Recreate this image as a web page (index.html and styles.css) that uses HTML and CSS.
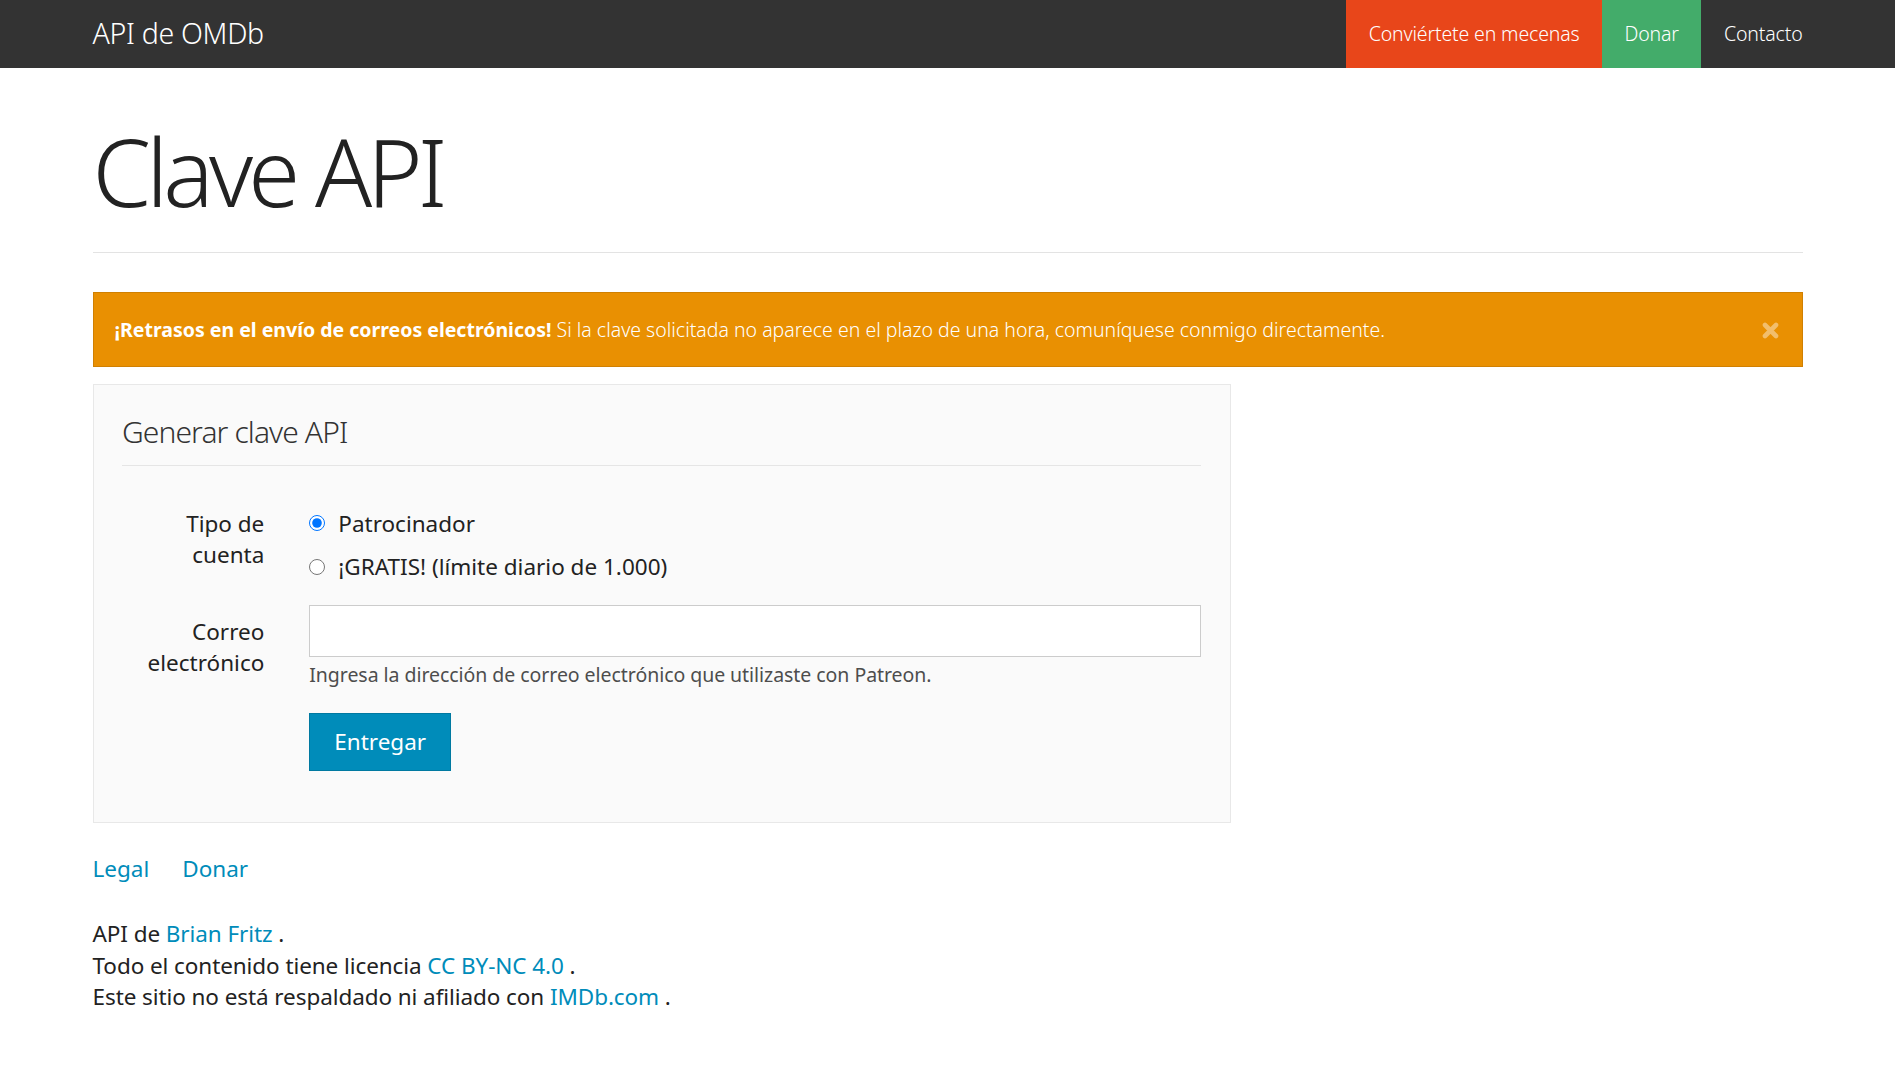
FILE: index.html
```html
<!DOCTYPE html>
<html lang="es">
<head>
<meta charset="utf-8">
<title>API de OMDb - Clave API</title>
<link rel="stylesheet" href="styles.css">
</head>
<body>
<nav class="navbar">
  <div class="container navbar-inner">
    <a class="brand" href="#">API de OMDb</a>
    <ul class="nav">
      <li><a class="nav-patreon" href="#">Conviértete en mecenas</a></li>
      <li><a class="nav-donate" href="#">Donar</a></li>
      <li><a href="#">Contacto</a></li>
    </ul>
  </div>
</nav>
<main class="container">
  <div class="page-header"><h1>Clave API</h1></div>
  <div class="alert">
    <span class="close" aria-label="Cerrar"><svg width="17" height="17" viewBox="0 0 17 17"><path d="M3 3 L14 14 M14 3 L3 14" stroke="currentColor" stroke-width="4.6" stroke-linecap="round" fill="none"/></svg></span>
    <strong>¡Retrasos en el envío de correos electrónicos!</strong> Si la clave solicitada no aparece en el plazo de una hora, comuníquese conmigo directamente.
  </div>
  <form class="well">
    <div class="legend">Generar clave API</div>
    <div class="form-group">
      <label class="control-label">Tipo de cuenta</label>
      <div class="radios">
        <label class="radio"><input type="radio" name="type" checked><span>Patrocinador</span></label>
        <label class="radio"><input type="radio" name="type"><span>¡GRATIS! (límite diario de 1.000)</span></label>
      </div>
    </div>
    <div class="form-group">
      <label class="control-label">Correo electrónico</label>
      <div class="field">
        <input class="form-control" type="email">
        <p class="help-block">Ingresa la dirección de correo electrónico que utilizaste con Patreon.</p>
      </div>
    </div>
    <div class="form-group">
      <div></div>
      <div><button class="btn" type="button">Entregar</button></div>
    </div>
  </form>
  <footer class="footer">
    <div class="footer-links"><a href="#">Legal</a><a href="#">Donar</a></div>
    <p class="footer-text">API de <a href="#">Brian Fritz</a> .<br>Todo el contenido tiene licencia <a href="#">CC BY-NC 4.0</a> .<br>Este sitio no está respaldado ni afiliado con <a href="#">IMDb.com</a> .</p>
  </footer>
</main>
</body>
</html>
```
FILE: styles.css
```css
* { box-sizing: border-box; }
html, body { margin: 0; }
body {
  font-family: "Noto Sans", "Open Sans", "Liberation Sans", sans-serif;
  font-size: 22.5px;
  line-height: 1.4;
  color: #222222;
  background: #ffffff;
}
a { color: #008cba; text-decoration: none; }
.container { width: 1710px; margin: 0 auto; }

.navbar { background: #333333; height: 67.5px; }
.navbar-inner { display: flex; justify-content: space-between; height: 100%; }
.brand { color: #ffffff; font-size: 28.5px; font-weight: 300; display: flex; align-items: center; letter-spacing: -0.3px; }
.nav { display: flex; list-style: none; margin: 0 -22.5px 0 0; padding: 0; }
.nav a {
  display: flex; align-items: center; height: 67.5px; padding: 0 22.5px;
  color: #ffffff; font-size: 19.5px; font-weight: 300; letter-spacing: -0.15px;
}
.nav-patreon { background: #e8461a; }
.nav-donate { background: #43ac6a; }

.page-header { margin-top: 51.5px; padding-bottom: 29px; border-bottom: 1px solid #e3e3e3; }
.page-header h1 { margin: 0; font-size: 94px; font-weight: 300; line-height: 1.11; letter-spacing: -4.8px; }

.alert {
  position: relative;
  margin-top: 38.5px;
  background: #e99002;
  border: 1px solid #d08002;
  color: #ffffff;
  padding: 23px 52.5px 23px 21px;
  font-size: 19.5px;
  font-weight: 300;
  line-height: 1.4;
}
.alert strong { font-weight: 700; }
.close {
  position: absolute; right: 23px; top: 29px;
  display: flex; width: 17px; height: 17px;
  color: rgba(255, 255, 255, 0.42);
}

.well {
  display: block;
  width: 1138px;
  margin: 17px 0 0;
  background: #fafafa;
  border: 1px solid #e8e8e8;
  padding: 25.7px 28.5px 28.5px;
}
.legend {
  font-size: 30px; font-weight: 300; line-height: 1.4; color: #333333; letter-spacing: -0.9px;
  padding-bottom: 12.3px; border-bottom: 1px solid #e5e5e5; margin-bottom: 31px;
}
.form-group { display: grid; grid-template-columns: 142.3px 1fr; column-gap: 45px; margin-bottom: 22.5px; }
.control-label { text-align: right; padding-top: 10.5px; }
.radios { padding-top: 10.5px; display: flex; flex-direction: column; gap: 12.25px; }
.radio { display: flex; align-items: center; }
.radio input { width: 16px; height: 16px; margin: 0 13px 0 0; }
.form-control {
  display: block; width: 100%; height: 52px; border: 1px solid #cccccc; background: #ffffff;
  font: inherit; padding: 0 12px; margin: 0;
}
.help-block { margin: 4px 0 2px; font-size: 19.5px; color: #4d4d4d; letter-spacing: -0.05px; }
.btn {
  font: inherit; color: #ffffff; background: #008cba; border: 1px solid #0079a1;
  padding: 12px 24px; line-height: 1.4; cursor: pointer;
}

.footer { margin-top: 30.5px; }
.footer-links { display: flex; gap: 33px; }
.footer-text { margin: 33.5px 0 0; letter-spacing: -0.08px; }
```
